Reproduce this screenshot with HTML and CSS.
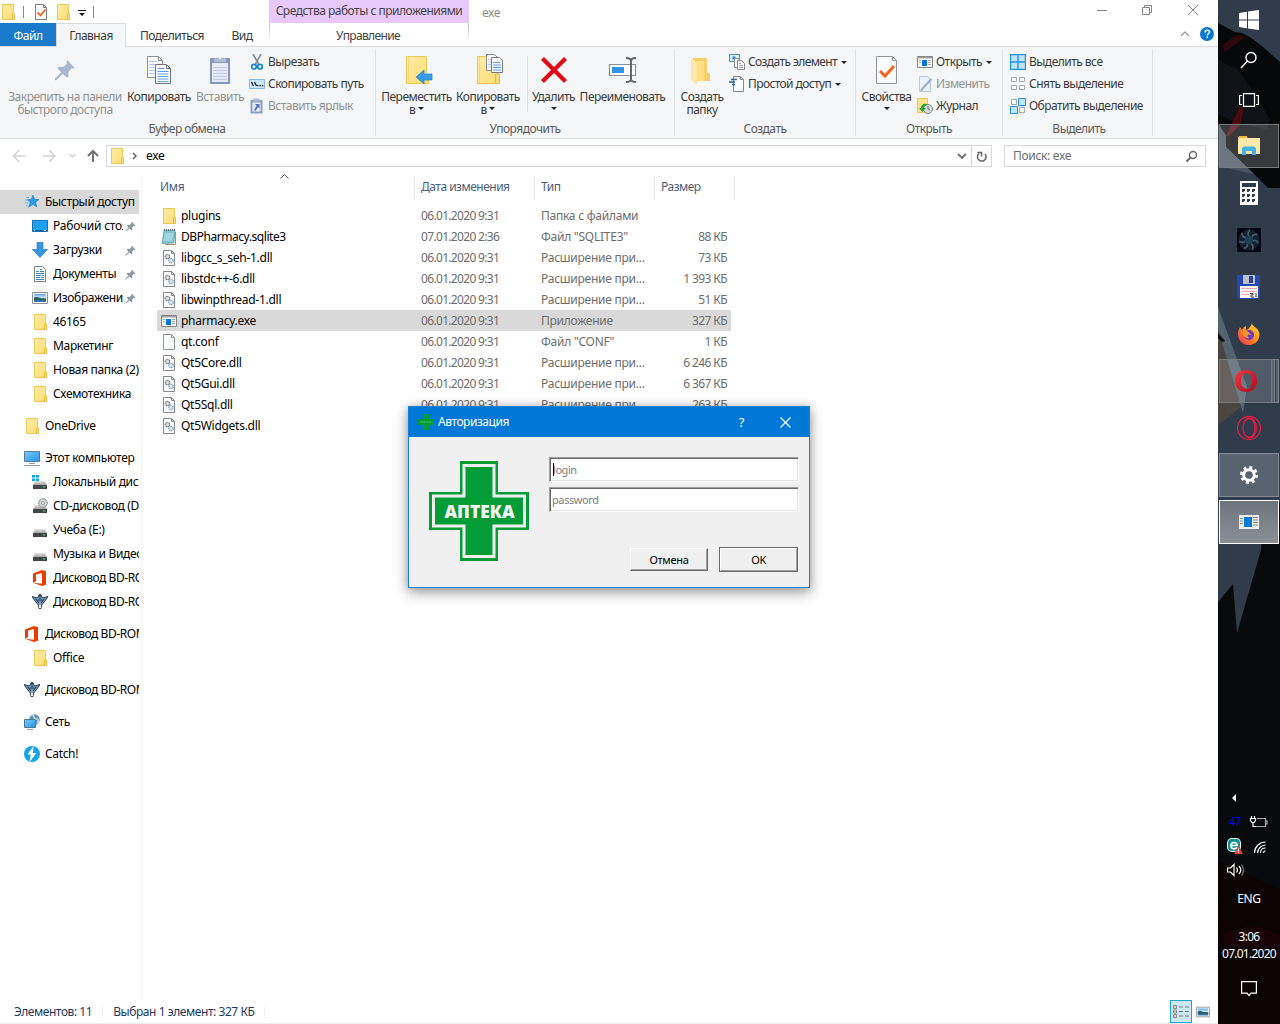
FILE: index.html
```html
<!DOCTYPE html>
<html lang="ru">
<head>
<meta charset="utf-8">
<title>exe</title>
<link rel="stylesheet" href="styles.css">
</head>
<body>
<svg class="sprite" width="0" height="0">
<defs>
<linearGradient id="gFolder" x1="0" y1="0" x2="1" y2="1"><stop offset="0" stop-color="#ffedA8"/><stop offset="1" stop-color="#fcdc72"/></linearGradient>
<linearGradient id="gBlue" x1="0" y1="0" x2="1" y2="1"><stop offset="0" stop-color="#7cc8fb"/><stop offset="1" stop-color="#2295ea"/></linearGradient>
<linearGradient id="gDrive" x1="0" y1="0" x2="0" y2="1"><stop offset="0" stop-color="#e2e2e2"/><stop offset="1" stop-color="#a5a5a5"/></linearGradient>
<linearGradient id="gFox" x1="1" y1="0" x2="0" y2="1"><stop offset="0" stop-color="#ffe52e"/><stop offset=".5" stop-color="#ff8a1e"/><stop offset="1" stop-color="#f0245c"/></linearGradient>
<linearGradient id="gOpera" x1="0" y1="0" x2="1" y2="1"><stop offset="0" stop-color="#ff3540"/><stop offset="1" stop-color="#a80a1c"/></linearGradient>
<linearGradient id="gPic" x1="0" y1="0" x2="0" y2="1"><stop offset="0" stop-color="#5ea9e6"/><stop offset=".5" stop-color="#d5ecfa"/><stop offset=".6" stop-color="#37687c"/><stop offset="1" stop-color="#3b79b5"/></linearGradient>
</defs>
<symbol id="folder" viewBox="0 0 16 16"><path d="M2.500.5h11v9l.5.5v5.500H2.500z" fill="url(#gFolder)" stroke="#ecc956"/><path d="M12.500 15.500v-5.500l1-1 1 1v5.500z" fill="#fbe08a" stroke="#e5bd45"/></symbol>
<symbol id="check" viewBox="0 0 16 16"><path d="M2.500.5h8l3 3v12h-11z" fill="#fbfcfd" stroke="#7d7d7d"/><path d="M10.500.5v3h3" fill="none" stroke="#7d7d7d"/><path d="M4.500 8.500l3 3 5-6" fill="none" stroke="#f0641e" stroke-width="1.800"/></symbol>
<symbol id="pin" viewBox="0 0 16 16"><path d="M9.500.8l5.700 5.700-1.400.6-.9-.4-2.500 2.700.2 3.200-1.300 1-2.900-2.900-4.600 4.500-1.200.2.200-1.200L5.300 9.600 2.600 6.900l1-1.300 3.200.200 2.700-2.500-.5-1z"/></symbol>
<symbol id="copy" viewBox="0 0 32 32"><path d="M4.500 2.500h11l4 4v17h-15z" fill="#fff" stroke="#8b9096"/><path d="M15.500 2.500v4h4" fill="none" stroke="#8b9096"/><path d="M6 7.500h8M6 10.500h11M6 13.500h11M6 16.500h11M6 19.500h11" stroke="#a5c8f5"/><path d="M12.500 10.500h11l4 4v15h-15z" fill="#fff" stroke="#70757b"/><path d="M23.500 10.500v4h4" fill="none" stroke="#70757b"/><path d="M14.500 14.500h7M14.500 17.500h11M14.500 20h11M14.500 22.500h11M14.500 25h11M14.500 27.500h11" stroke="#5a9cf0"/></symbol>
<symbol id="paste" viewBox="0 0 32 32"><rect x="6" y="4" width="20" height="26" rx="1" fill="#8498bd"/><path d="M8 9h16v19H8z" fill="#e5ebf5"/><path d="M9 13.500h14M9 16.500h14M9 19.500h14M9 22.500h14M9 25.500h14" stroke="#becbe0"/><path d="M10 8V4.500h3.500a3 3 0 0 1 5 0H22V8z" fill="#b1bfd5"/><circle cx="16" cy="4" r="1.200" fill="#eef2f8"/></symbol>
<symbol id="cut" viewBox="0 0 16 16"><path d="M4 0l5.500 10M12 0L6.500 10" stroke="#86909a" stroke-width="1.700"/><circle cx="5" cy="12.700" r="2.300" fill="none" stroke="#1684ca" stroke-width="1.700"/><circle cx="11" cy="12.700" r="2.300" fill="none" stroke="#1684ca" stroke-width="1.700"/></symbol>
<symbol id="path" viewBox="0 0 16 16"><path d="M.5 3.500h15v9H.5z" fill="#c9e7fb" stroke="#86bade"/><path d="M2.500 6l2 4M5.500 6l2 4" stroke="#111" stroke-width="1.200"/><path d="M8 9h1.300v1.300H8zM10.500 9h1.300v1.300h-1.300zM13 9h1.300v1.300H13z" fill="#111"/></symbol>
<symbol id="shortcut" viewBox="0 0 16 16"><path d="M1.500 2h12v13.500h-12z" fill="#8da0c2"/><path d="M3.500 4.500h8v9h-8z" fill="#e6ecf6"/><path d="M4.500 0.500h6v3h-6z" fill="#aab9d2"/><path d="M6 6h4.500v4.500L9 9.200 6.500 13 5 12l2.600-3.900z" fill="#5875ad"/></symbol>
<symbol id="moveto" viewBox="0 0 32 32"><path d="M5.500 2.500h20v20l2 1v6h-22z" fill="url(#gFolder)" stroke="#ecc956"/><path d="M7.500 3v26" stroke="#f3d878"/><path d="M15 23l8-7v4h8v6h-8v4z" fill="#3a9be8" stroke="#2680cb" stroke-width=".7"/></symbol>
<symbol id="copyto" viewBox="0 0 32 32"><path d="M5.500 2.500h20v20l2 1v6h-22z" fill="url(#gFolder)" stroke="#ecc956"/><path d="M7.500 3v26" stroke="#f3d878"/><path d="M23.500 29v-9h4v9" stroke="#e6be45" fill="#f9d876"/><path d="M14.500.5h8l3 3v13h-11z" fill="#fff" stroke="#85898d"/><path d="M16 5.500h5M16 8h5M16 10.500h5M16 13h5" stroke="#a6c9f3"/><path d="M19.500 3.500h8l3 3v12h-11z" fill="#fff" stroke="#777b80"/><path d="M21 8.500h7M21 11h8M21 13.500h8M21 16h8" stroke="#5698ef"/></symbol>
<symbol id="delete" viewBox="0 0 32 32"><path d="M4.500 4.500l23 23m0-23l-23 23" stroke="#df0b17" stroke-width="4.200"/></symbol>
<symbol id="rename" viewBox="0 0 32 32"><path d="M2.500 10.500h26v11h-26z" fill="#fff" stroke="#8b8f94" stroke-width="1.200"/><path d="M5 13h12v6H5z" fill="#2e95ea"/><path d="M19 4c3 0 5 1 5 3 0-2 2-3 5-3M24 6v20M19 28c3 0 5-1 5-3 0 2 2 3 5 3" fill="none" stroke="#64686c" stroke-width="2"/></symbol>
<symbol id="newfolder" viewBox="0 0 32 32"><path d="M7 4h14v14l3 2v7H9z" fill="#f5cf69"/><path d="M5 4l6 5v22l-6-5z" fill="#fde8a8"/><path d="M11 7h7v20h-7z" fill="#ffdf83"/></symbol>
<symbol id="newitem" viewBox="0 0 16 16"><path d="M.5.500h10v7H.5z" fill="#d7effc" stroke="#4d95bc"/><path d="M3.500 2.500h3v3h-3z" fill="#3186b4"/><path d="M5.500 4.500h5v9h-5z" fill="#fff" stroke="#8a8e92"/><path d="M8.500 6.500h4l3 3v6h-7z" fill="#fff" stroke="#85898d"/><path d="M10 9.500h2M10 11.500h4M10 13.500h4" stroke="#b799a3"/></symbol>
<symbol id="access" viewBox="0 0 16 16"><path d="M4.500.5h7l3 3v12h-10z" fill="#fff" stroke="#858a8e"/><path d="M11.500.5v3h3" fill="none" stroke="#858a8e"/><path d="M2 3.500h6M0 6h6M3 8.500h3" stroke="#20618f" stroke-width="1.300"/></symbol>
<symbol id="props" viewBox="0 0 32 32"><path d="M5.500 2.500h16l4 4v23h-20z" fill="#fcfcfd" stroke="#909499"/><path d="M21.500 2.500v4h4" fill="none" stroke="#909499"/><path d="M9 17l5 5 9-10" fill="none" stroke="#f0641e" stroke-width="3"/></symbol>
<symbol id="app" viewBox="0 0 16 16"><path d="M.5 2.500h15v11H.5z" fill="#fff" stroke="#818589"/><path d="M1 3h14v1.500H1z" fill="#9da1a4"/><path d="M5 6h5v6H5z" fill="#0078d7"/><path d="M11 6.500h3M11 8.500h3M11 10.500h3M2 6.500h2M2 8.500h2" stroke="#a2a6aa"/></symbol>
<symbol id="edit" viewBox="0 0 16 16"><path d="M2.500.5h8l3 3v12h-11z" fill="#edf1f9" stroke="#bdc9dc"/><path d="M14.500 3L6 12l-2 3" stroke="#9cafd0" stroke-width="2" fill="none"/></symbol>
<symbol id="history" viewBox="0 0 16 16"><path d="M.5.5h10v14H.5z" fill="#fde28a" stroke="#ecc956"/><circle cx="11" cy="11" r="4.500" fill="#d9dcdc" stroke="#848989"/><path d="M11 8v3l2 1" fill="none" stroke="#6c7070"/><path d="M10 6C6 5 4 7 4 10H2l3.500 4L9 10H7c0-2 1-3 3-3z" fill="#23a735"/></symbol>
<symbol id="selall" viewBox="0 0 16 16"><path d="M.5.500h15v15H.5zM8 .5v15M.5 8h15" fill="#bfe3fb" stroke="#2390e0" stroke-width="1.300"/></symbol>
<symbol id="selnone" viewBox="0 0 16 16"><path d="M1.500 1.500h5v4h-5zM9.500 1.500h5v4h-5zM1.500 9.500h5v4h-5zM9.500 9.500h5v4h-5z" fill="#fff" stroke="#a6a9ac"/></symbol>
<symbol id="selinv" viewBox="0 0 16 16"><path d="M1.500 1.500h5v5h-5zM9.500 9.500h5v5h-5z" fill="#fff" stroke="#a6a9ac"/><path d="M8.500.5h7v7h-7zM.5 8.500h7v7h-7z" fill="#bfe3fb" stroke="#2390e0"/></symbol>
<symbol id="star" viewBox="0 0 16 16"><path d="M9 1l1.600 4.300 4.400.2-3.400 2.900 1.300 4.600L9 10.500l-4.300 2.700 1.500-4.800L3 5.500l4.400-.2z" fill="#299ce8" stroke="#1e7fc8" stroke-width=".6"/><path d="M2 3.500h3M1 6h3M1 9h3.500M2 12h2" stroke="#66b7ec"/></symbol>
<symbol id="desktop" viewBox="0 0 16 16"><path d="M.5 2.500h15v11H.5z" fill="#1ea1f5" stroke="#1472b8"/><path d="M1 12.500h14" stroke="#0e66a6"/><path d="M2 12.500h1M12 12.500h2" stroke="#fff"/></symbol>
<symbol id="download" viewBox="0 0 16 16"><path d="M5 .5h6v7h4.500L8 15.500.5 7.500H5z" fill="#3995e2" stroke="#2578c2" stroke-width=".7"/></symbol>
<symbol id="docs" viewBox="0 0 16 16"><path d="M2.500.5h8l3 3v12h-11z" fill="#fff" stroke="#7e8387"/><path d="M4 5.500h3M8 3.500h2M8 5.500h4M4 7.500h8M4 9.500h5M10 9.500h2M4 11.500h4M9 11.500h3M4 13.500h8" stroke="#3c83b7"/></symbol>
<symbol id="image" viewBox="0 0 16 16"><path d="M.5 2.500h15v11H.5z" fill="#fff" stroke="#8c9195"/><path d="M2 4h12v8H2z" fill="url(#gPic)"/><path d="M2 7.500c4-2 6 2 12 1V10H2z" fill="#295e67"/></symbol>
<symbol id="pc" viewBox="0 0 16 16"><path d="M.5 1.500h15v10H.5z" fill="url(#gBlue)" stroke="#557c94"/><path d="M5 13.500h6M0 15.500h16" stroke="#8ba0b0"/></symbol>
<symbol id="drive" viewBox="0 0 16 16"><path d="M3 7h10l2 4H1z" fill="url(#gDrive)"/><path d="M1 11h14v4H1z" fill="#42474a"/><path d="M11 12.500h2v1h-2z" fill="#45e34d"/></symbol>
<symbol id="windrive" viewBox="0 0 16 16"><use href="#drive"/><path d="M0 1h3v2.500H0zM4 1h3v2.500H4zM0 4.500h3V7H0zM4 4.500h3V7H4z" fill="#00a8e8"/></symbol>
<symbol id="cddrive" viewBox="0 0 16 16"><use href="#drive"/><circle cx="11" cy="5" r="4.300" fill="#d3d5d6" stroke="#8f9395"/><circle cx="11" cy="5" r="1.500" fill="#fff" stroke="#909394"/></symbol>
<symbol id="office" viewBox="0 0 16 16"><path d="M1 3.500L10 0l4 1.200v13.600L10 16l-9-3.300 9 1V3L4 4.500v6.700l-3 1.500z" fill="#eb3c00"/></symbol>
<symbol id="ship" viewBox="0 0 16 16"><path d="M0 2.500l5.500 1.500L7 1h2l1.500 3L16 2.500 13 7l-3.500 4L9 14.500H7L6.500 11 3 7z" fill="#7fa6c6" stroke="#192a39" stroke-width=".9"/><path d="M8 0v5M3.500 4.500L7 9M12.500 4.500L9 9M5.500 6h5" stroke="#142638" fill="none"/><path d="M7 11h2v3H7z" fill="#e7f3fa"/></symbol>
<symbol id="network" viewBox="0 0 16 16"><circle cx="10.500" cy="5.500" r="5.300" fill="#6495b9"/><path d="M8 1c3 0 1 4 4 4s3 3 1 4" fill="none" stroke="#c4e0ec" stroke-width="1.500"/><path d="M.5 5.500h11v8H.5z" fill="url(#gBlue)" stroke="#4b7a98"/><path d="M3 15.500h6" stroke="#8b9ca8"/></symbol>
<symbol id="catch" viewBox="0 0 16 16"><circle cx="8" cy="8" r="8" fill="#13a5e8"/><path d="M9.500 0L3.500 8.500h3.200L5.500 16l7-9H9z" fill="#fff"/></symbol>
<symbol id="dll" viewBox="0 0 16 16"><path d="M2.500.5h8l3 3v12h-11z" fill="#fff" stroke="#85898d"/><path d="M10.500.5v3h3" fill="none" stroke="#85898d"/><circle cx="6.500" cy="6.500" r="2.200" fill="#dcdfe1" stroke="#757b80" stroke-width="1.300" stroke-dasharray="1.300 .5"/><circle cx="10" cy="10.500" r="2.200" fill="#d7e9f7" stroke="#7ea6c3" stroke-width="1.300" stroke-dasharray="1.300 .5"/></symbol>
<symbol id="file" viewBox="0 0 16 16"><path d="M2.500.5h8l3 3v12h-11z" fill="#fafbfc" stroke="#909498"/><path d="M10.500.5v3h3" fill="none" stroke="#909498"/></symbol>
<symbol id="note" viewBox="0 0 16 16"><path d="M3 1.500h11l-1 12.500-12 .5z" fill="#83c5d2" stroke="#5b929d" stroke-width=".7"/><path d="M4 5h8M3.500 7h8.500M3.500 9h8M3 11h8" stroke="#bfe6ec"/><path d="M14.500 3v12.500H4" fill="none" stroke="#a3946c"/><path d="M3 1h11" stroke="#4c6c72" stroke-width="2" stroke-dasharray="1 1"/></symbol>
<symbol id="cross" viewBox="0 0 100 100"><path d="M31 0h38v31h31v38H69v31H31V69H0V31h31z" fill="#049c36"/><path d="M35 4.500h30v30.500h30.500v30H65v30.500H35V65H4.500V35H35z" fill="none" stroke="#efefef" stroke-width="3"/></symbol>
</svg>

<div class="screen">
<main class="explorer">
  <header class="top">
    <div class="top-left">
      <div class="quick"><svg class="i"><use href="#folder"/></svg><i class="vr"></i><svg class="i q2"><use href="#check"/></svg><svg class="i q3"><use href="#folder"/></svg><svg class="q4" width="8" height="7"><path d="M0 0h8v1H0zM1 3h6L4 6z" fill="#111"/></svg><i class="vr"></i></div>
      <nav class="tabs"><span class="tab file">Файл</span><span class="tab active">Главная</span><span class="tab share">Поделиться</span><span class="tab">Вид</span></nav>
    </div>
    <div class="context"><div class="ctx-title">Средства работы с приложениями</div><div class="ctx-tab">Управление</div></div>
    <div class="wintitle">exe</div>
    <div class="controls">
      <svg width="104" height="16" viewBox="0 0 104 16" fill="none" stroke="#858585"><path d="M1 10.500h10M46.500 7.500h7v7h-7zM48.500 7.500v-2h7v7h-2M92 5l10 10m0-10L92 15"/></svg>
      <svg width="34" height="16" viewBox="0 0 34 16"><path d="M1 10l4-4 4 4" fill="none" stroke="#999" stroke-width="1.200"/><circle cx="27" cy="8" r="7" fill="#0a77d0"/><path d="M25 6.500c0-3 4.500-3 4.500-.5 0 1.500-2.200 1.500-2.200 3.500M27.300 10.500V12" fill="none" stroke="#fff" stroke-width="1.400"/></svg>
    </div>
  </header>

  <section class="ribbon">
    <div class="group g1">
      <div class="tools">
        <div class="big b-pin off"><svg class="pin-big"><use href="#pin"/></svg><span>Закрепить на панели<br>быстрого доступа</span></div>
        <div class="big b-copy"><svg><use href="#copy"/></svg><span>Копировать</span></div>
        <div class="big b-paste off"><svg><use href="#paste"/></svg><span>Вставить</span></div>
        <div class="small"><div><svg class="i"><use href="#cut"/></svg><span>Вырезать</span></div><div><svg class="i"><use href="#path"/></svg><span>Скопировать путь</span></div><div class="off"><svg class="i"><use href="#shortcut"/></svg><span>Вставить ярлык</span></div></div>
      </div><div class="caption">Буфер обмена</div>
    </div>
    <div class="group g2">
      <div class="tools">
        <div class="big b-move"><svg><use href="#moveto"/></svg><span>Переместить<br>в <i class="dd"></i></span></div>
        <div class="big b-copyto"><svg><use href="#copyto"/></svg><span>Копировать<br>в <i class="dd"></i></span></div>
        <i class="sep"></i>
        <div class="big b-del"><svg><use href="#delete"/></svg><span>Удалить<br><i class="dd"></i></span></div>
        <div class="big b-ren"><svg><use href="#rename"/></svg><span>Переименовать</span></div>
      </div><div class="caption">Упорядочить</div>
    </div>
    <div class="group g3">
      <div class="tools">
        <div class="big b-new"><svg><use href="#newfolder"/></svg><span>Создать<br>папку</span></div>
        <div class="small"><div><svg class="i"><use href="#newitem"/></svg><span>Создать элемент</span><i class="dd"></i></div><div><svg class="i"><use href="#access"/></svg><span>Простой доступ</span><i class="dd"></i></div></div>
      </div><div class="caption">Создать</div>
    </div>
    <div class="group g4">
      <div class="tools">
        <div class="big b-prop"><svg><use href="#props"/></svg><span>Свойства<br><i class="dd"></i></span></div>
        <div class="small"><div><svg class="i"><use href="#app"/></svg><span>Открыть</span><i class="dd"></i></div><div class="off"><svg class="i"><use href="#edit"/></svg><span>Изменить</span></div><div><svg class="i"><use href="#history"/></svg><span>Журнал</span></div></div>
      </div><div class="caption">Открыть</div>
    </div>
    <div class="group g5">
      <div class="tools">
        <div class="small"><div><svg class="i"><use href="#selall"/></svg><span>Выделить все</span></div><div><svg class="i"><use href="#selnone"/></svg><span>Снять выделение</span></div><div><svg class="i"><use href="#selinv"/></svg><span>Обратить выделение</span></div></div>
      </div><div class="caption">Выделить</div>
    </div>
  </section>

  <section class="address">
    <svg class="nav" width="106" height="20" viewBox="0 0 106 20" fill="none"><path d="M13.500 10h12M19 4.500L13.500 10l5.500 5.500M43 10h12M49.500 4.500L55 10l-5.500 5.500" stroke="#d2d2d2" stroke-width="1.500"/><path d="M69.500 8l3 3 3-3" stroke="#d2d2d2" stroke-width="1.300"/><path d="M93 16V5M88 10l5-5 5 5" stroke="#707070" stroke-width="2"/></svg>
    <div class="crumbs"><svg class="i"><use href="#folder"/></svg><svg class="chev" width="6" height="8"><path d="M1 1l3 3-3 3" fill="none" stroke="#666" stroke-width="1.500"/></svg><span>exe</span><svg class="drop" width="10" height="7"><path d="M1 1l4 4 4-4" fill="none" stroke="#707070" stroke-width="1.800"/></svg><i class="refresh"><svg width="12" height="13" viewBox="0 0 12 13"><path d="M3 3.500A4.300 4.300 0 1 0 9 4M1.500 2.500h4v4" fill="none" stroke="#666" stroke-width="1.500"/></svg></i></div>
    <div class="search"><span>Поиск: exe</span><svg width="13" height="13" viewBox="0 0 13 13"><circle cx="8" cy="5" r="3.500" fill="none" stroke="#666" stroke-width="1.400"/><path d="M5.500 7.500L1.500 11.500" stroke="#666" stroke-width="1.800"/></svg></div>
  </section>

  <section class="content">
    <aside class="tree">
      <div class="n sel"><svg class="i"><use href="#star"/></svg><span>Быстрый доступ</span></div>
      <div class="n sub"><svg class="i"><use href="#desktop"/></svg><span class="cut desk">Рабочий стол</span><svg class="pin"><use href="#pin"/></svg></div>
      <div class="n sub"><svg class="i"><use href="#download"/></svg><span class="cut">Загрузки</span><svg class="pin"><use href="#pin"/></svg></div>
      <div class="n sub"><svg class="i"><use href="#docs"/></svg><span class="cut">Документы</span><svg class="pin"><use href="#pin"/></svg></div>
      <div class="n sub"><svg class="i"><use href="#image"/></svg><span class="cut">Изображения</span><svg class="pin"><use href="#pin"/></svg></div>
      <div class="n sub"><svg class="i"><use href="#folder"/></svg><span>46165</span></div>
      <div class="n sub"><svg class="i"><use href="#folder"/></svg><span>Маркетинг</span></div>
      <div class="n sub"><svg class="i"><use href="#folder"/></svg><span>Новая папка (2)</span></div>
      <div class="n sub"><svg class="i"><use href="#folder"/></svg><span>Схемотехника</span></div>
      <div class="n root"><svg class="i"><use href="#folder"/></svg><span>OneDrive</span></div>
      <div class="n root"><svg class="i"><use href="#pc"/></svg><span>Этот компьютер</span></div>
      <div class="n sub"><svg class="i"><use href="#windrive"/></svg><span>Локальный диск</span></div>
      <div class="n sub"><svg class="i"><use href="#cddrive"/></svg><span>CD-дисковод (D:)</span></div>
      <div class="n sub"><svg class="i"><use href="#drive"/></svg><span>Учеба (E:)</span></div>
      <div class="n sub"><svg class="i"><use href="#drive"/></svg><span>Музыка и Видео</span></div>
      <div class="n sub"><svg class="i"><use href="#office"/></svg><span class="bd">Дисковод BD-ROM</span></div>
      <div class="n sub"><svg class="i"><use href="#ship"/></svg><span class="bd">Дисковод BD-ROM</span></div>
      <div class="n root"><svg class="i"><use href="#office"/></svg><span class="bd">Дисковод BD-ROM</span></div>
      <div class="n sub"><svg class="i"><use href="#folder"/></svg><span>Office</span></div>
      <div class="n root"><svg class="i"><use href="#ship"/></svg><span class="bd">Дисковод BD-ROM</span></div>
      <div class="n root"><svg class="i"><use href="#network"/></svg><span>Сеть</span></div>
      <div class="n root"><svg class="i"><use href="#catch"/></svg><span>Catch!</span></div>
    </aside>
    <div class="files">
      <div class="head"><span class="h1">Имя<svg width="9" height="5"><path d="M.5 4.500l4-4 4 4" fill="none" stroke="#555"/></svg></span><span>Дата изменения</span><span>Тип</span><span class="h4">Размер</span></div>
      <div class="r"><svg class="i"><use href="#folder"/></svg><b>plugins</b><span class="date">06.01.2020 9:31</span><span>Папка с файлами</span><em></em></div>
      <div class="r"><svg class="i"><use href="#note"/></svg><b class="db">DBPharmacy.sqlite3</b><span class="date">07.01.2020 2:36</span><span>Файл "SQLITE3"</span><em>88 КБ</em></div>
      <div class="r"><svg class="i"><use href="#dll"/></svg><b>libgcc_s_seh-1.dll</b><span class="date">06.01.2020 9:31</span><span>Расширение при...</span><em>73 КБ</em></div>
      <div class="r"><svg class="i"><use href="#dll"/></svg><b>libstdc++-6.dll</b><span class="date">06.01.2020 9:31</span><span>Расширение при...</span><em>1 393 КБ</em></div>
      <div class="r"><svg class="i"><use href="#dll"/></svg><b>libwinpthread-1.dll</b><span class="date">06.01.2020 9:31</span><span>Расширение при...</span><em>51 КБ</em></div>
      <div class="r picked"><svg class="i"><use href="#app"/></svg><b>pharmacy.exe</b><span class="date">06.01.2020 9:31</span><span>Приложение</span><em>327 КБ</em></div>
      <div class="r"><svg class="i"><use href="#file"/></svg><b>qt.conf</b><span class="date">06.01.2020 9:31</span><span>Файл "CONF"</span><em>1 КБ</em></div>
      <div class="r"><svg class="i"><use href="#dll"/></svg><b>Qt5Core.dll</b><span class="date">06.01.2020 9:31</span><span>Расширение при...</span><em>6 246 КБ</em></div>
      <div class="r"><svg class="i"><use href="#dll"/></svg><b>Qt5Gui.dll</b><span class="date">06.01.2020 9:31</span><span>Расширение при...</span><em>6 367 КБ</em></div>
      <div class="r"><svg class="i"><use href="#dll"/></svg><b>Qt5Sql.dll</b><span class="date">06.01.2020 9:31</span><span>Расширение при...</span><em>263 КБ</em></div>
      <div class="r"><svg class="i"><use href="#dll"/></svg><b>Qt5Widgets.dll</b></div>
    </div>
  </section>

  <footer class="status"><span>Элементов: 11</span><i></i><span>Выбран 1 элемент: 327 КБ</span><i></i>
    <div class="views"><div class="details"><svg width="16" height="14" viewBox="0 0 16 14"><path d="M.5.500h3v3h-3zM.5 5h3v3h-3zM.5 9.500h3v3h-3z" fill="#fff" stroke="#888"/><path d="M6 2h4M12 2h4M6 6.500h4M12 6.500h4M6 11h4M12 11h4" stroke="#777"/><path d="M1.500 1.500h1v1h-1z" fill="#b33"/><path d="M1.500 6h1v1h-1z" fill="#27c"/><path d="M1.500 10.500h1v1h-1z" fill="#b33"/></svg></div><svg class="thumbs"><use href="#image"/></svg></div>
  </footer>
</main>

<aside class="taskbar">
  <svg class="wall" width="62" height="1024" viewBox="0 0 62 1024"><path fill="#303c4a" d="M0 0h62v1024H0z"/><path fill="#07080a" d="M0 23l17 9 7 1 8 4 13 10 17 15v126H50l-15-15L8 147v-12l-8-12z"/><path fill="#101217" d="M0 60l20 10 18 25 14 25-3 10-30-8L0 115z"/><path fill="#2b080c" d="M4 45l15-10 8 2L7 52z"/><path fill="#4b0b0e" d="M22 106l4 4-4 15-11 11H8l8-17z"/><path fill="#495461" d="M0 124l8 12v11l28 27-10-2-26-6z"/><path fill="#4a4541" d="M0 332l9 10 8 28 8 28-3 10-22 17z"/><path fill="#53646f" d="M0 307l29 80-4 26L0 329z"/><path fill="#0b0b0c" d="M0 333l7 8-3 1-4-4z"/><path fill="#090a0b" d="M0 602l15-18 4 49 24-83 2-23 17-25v522H0z"/><path fill="#0b0304" d="M0 860l62 30v134H0z"/><path fill="#180407" d="M5 933l30-8 27 10v12H7z"/></svg>
  <div class="task s"><svg width="20" height="20" viewBox="0 0 20 20" fill="#fff"><path d="M0 3l8-1.200v7.700H0zM9 1.600L20 0v9.500H9zM0 10.500h8v7.700L0 17zM9 10.500h11V20L9 18.400z"/></svg></div>
  <div class="task s"><svg width="18" height="18" viewBox="0 0 18 18" fill="none" stroke="#fff" stroke-width="1.400"><circle cx="11" cy="6.500" r="5"/><path d="M7.500 10L1 17"/></svg></div>
  <div class="task s"><svg width="20" height="14" viewBox="0 0 20 14" fill="none" stroke="#fff" stroke-width="1.200"><path d="M4.500.6h11v12.800h-11zM3 2.500H.6v9H3M17 2.500h2.400v9H17"/></svg></div>
  <div class="task first"><div class="box"><svg width="22" height="19" viewBox="0 0 22 19"><path d="M0 1h9l1 1h12v16H0z" fill="#ffe9a6"/><path d="M1 0h8v2H1z" fill="#f1bb36"/><path d="M4 19v-7l2-1.500h10l2 1.500v7h-4v-4H8v4z" fill="#43b1e5"/></svg></div></div>
  <div class="task"><svg width="18" height="24" viewBox="0 0 18 24"><path d="M0 0h18v24H0z" fill="#fff"/><path d="M2 2h14v4H2z" fill="#2f3d49"/><path d="M2 8h3v2H4v1H2zM7 8h3v2H9v1H7zM12 8h3v2h-1v1h-2zM2 13h3v2H4v1H2zM7 13h3v2H9v1H7zM12 13h3v2h-1v1h-2zM2 18h3v2H4v1H2zM7 18h3v2H9v1H7zM12 18h3v2h-1v1h-2z" fill="#2f3d49"/></svg></div>
  <div class="task"><svg width="24" height="24" viewBox="0 0 24 24"><rect width="24" height="24" rx="1" fill="#030611"/><circle cx="12" cy="12" r="10.500" fill="#14202e"/><g fill="none" stroke="#425b6c" stroke-width="1.800"><path id="fb" d="M12 8c-2-2-1-4 1-6"/><use href="#fb" transform="rotate(51 12 12)"/><use href="#fb" transform="rotate(103 12 12)"/><use href="#fb" transform="rotate(154 12 12)"/><use href="#fb" transform="rotate(206 12 12)"/><use href="#fb" transform="rotate(257 12 12)"/><use href="#fb" transform="rotate(309 12 12)"/></g><circle cx="12" cy="12" r="4" fill="#1e4054"/></svg></div>
  <div class="task"><svg width="24" height="24" viewBox="0 0 24 24"><path d="M1 0h21l1 1v23H2l-2-2V0z" fill="#2449b2"/><path d="M6 0h12v9H6z" fill="#b9c1cb"/><path d="M12 1h4v7h-4z" fill="#2b418d"/><path d="M3 11h18v12H3z" fill="#fff6f3"/><path d="M4 13.500h16M4 16.500h16M4 19.500h8" stroke="#ecaaa8"/><path d="M13 18.500h3v1.500h-2v2h3M19 18v4.500" stroke="#444" fill="none"/></svg></div>
  <div class="task"><svg width="24" height="24" viewBox="0 0 24 24"><path d="M15 1c0 3 4 4 6 7 4 7-1 15-9 15C5 23 1 18 1 12c0-3 1-5 2-7l2 3c1-2 3-4 4-4v4c3-1 5-4 6-7z" fill="url(#gFox)"/><circle cx="12" cy="13" r="5" fill="#683dc4"/><path d="M5 9c4-1 8 1 9 4-4-2-5 2-1 3-5 1-8-3-8-7z" fill="#ff962b"/></svg></div>
  <div class="task"><div class="box stacked"><svg width="24" height="24" viewBox="0 0 24 24"><path fill="url(#gOpera)" fill-rule="evenodd" d="M12 1c7 0 11 5 11 11s-4 11-11 11S1 18 1 12 5 1 12 1zm1 3C9 4 7 8 7 12s2 8 6 8 5-4 5-8-1-8-5-8z"/></svg></div><i class="stack"></i></div>
  <div class="task"><svg width="26" height="26" viewBox="0 0 26 26" fill="none" stroke="#e11d48" stroke-width="1.300"><circle cx="13" cy="13" r="11.500"/><ellipse cx="13" cy="13" rx="6" ry="9.500"/><path d="M12 3.500c11-3 11 22 0 19"/></svg></div>
  <div class="task"><div class="box gray"><svg width="20" height="20" viewBox="0 0 20 20"><circle cx="10" cy="10" r="5.300" fill="none" stroke="#fff" stroke-width="3"/><circle cx="10" cy="10" r="7.500" fill="none" stroke="#fff" stroke-width="3" stroke-dasharray="3 2.890"/></svg></div></div>
  <div class="task"><div class="box current"><svg width="20" height="14" viewBox="0 0 20 14"><path d="M0 0h20v14H0z" fill="#eee"/><path d="M5 2h8v10H5z" fill="#087bd5"/><path d="M1 3.500h3M1 6h3M1 8.500h3M14 2.500h5M14 5h5M14 7.500h5M14 10h5" stroke="#888"/></svg></div></div>
  <div class="tray">
    <svg width="62" height="90" viewBox="0 0 62 90"><path d="M18 4v8L14 8z" fill="#fff"/><g fill="none" stroke="#fff" stroke-width="1.200"><path d="M39 28.500h8.500v8H37M47.500 31h1.500v3h-1.500" stroke="#aaa"/><path d="M33.500 26v2M36.500 26v2M32.500 28.500h5v2l-1.500 2h-2l-1.500-2zM35 32v4.500h3"/><path d="M36.500 63c0-6 5-11 11-11M39.500 63c0-4 4-8 8-8M42.500 63c0-3 2-5 5-5M45.500 63c0-1 1-2 2-2"/><path d="M9.500 78h3l3.500-3.500v11L12.500 82h-3zM18.500 77.500q2 2.500 0 5M21 76q3.500 4 0 8"/><path d="M23.500 74.500q4 5.500 0 11" stroke="#777"/></g><rect x="9" y="48" width="14" height="14" rx="5" fill="#eaf7f6"/><rect x="10" y="49" width="12" height="12" rx="4" fill="#138e93"/><path d="M13 55.500h6c0-4-6-4-6 0s4 4 6 2" fill="none" stroke="#fff" stroke-width="1.700"/><path d="M20.500 56l4.500 8h-9z" fill="#e6443d"/><path d="M20.500 58.500v3M20.500 62v1" stroke="#fff"/></svg>
    <span class="temp">47</span>
  </div>
  <div class="lang">ENG</div>
  <div class="clock">3:06<br>07.01.2020</div>
  <svg class="notif" width="16" height="16" viewBox="0 0 16 16"><path d="M.6.600h14.800v11.500H10L8 14.500l-2-2.400H.6z" fill="none" stroke="#fff" stroke-width="1.200"/></svg>
</aside>

<section class="dialog">
  <header><svg class="i"><path d="M5 0h6v5h5v6h-5v5H5v-5H0V5h5z" fill="#049c36"/><path d="M2.500 8h11" stroke="#7cc78f" stroke-dasharray="1 .6"/></svg><span>Авторизация</span><b>?</b><svg class="x" width="11" height="11" viewBox="0 0 11 11"><path d="M.5.500l10 10m0-10l-10 10" stroke="#fff" stroke-width="1.200"/></svg></header>
  <div class="body">
    <svg class="logo" width="100" height="100" viewBox="0 0 100 100"><use href="#cross"/><text x="15.500" y="56.500" textLength="70" lengthAdjust="spacingAndGlyphs">АПТЕКА</text></svg>
    <div class="form"><div class="field focus">login</div><div class="field">password</div><div class="buttons"><div class="btn">Отмена</div><div class="btn ok">OK</div></div></div>
  </div>
</section>
</div>
</body>
</html>
```
FILE: styles.css
```css
* { box-sizing: border-box; }
body { margin: 0; font: 12px/16px "Noto Sans", "Open Sans", sans-serif; letter-spacing: -.33px; color: #000; overflow: hidden; }
.sprite { position: absolute; }
.screen { position: relative; display: flex; width: 1280px; height: 1024px; }
.i { width: 16px; height: 16px; flex: none; }
i, em { font-style: normal; }
b { font-weight: 400; }
span { white-space: nowrap; }
.explorer { width: 1218px; display: flex; flex-direction: column; background: #fff; }

.top { height: 47px; display: flex; flex: none; border-bottom: 1px solid #dadbdc; letter-spacing: -.5px; }
.top-left { width: 269px; }
.quick { height: 23px; display: flex; align-items: center; }
.vr { width: 1px; height: 12px; background: #888; margin-left: 7px; }
.q2 { margin-left: 9px; }
.q3 { margin-left: 6px; }
.q4 { margin-left: 7px; margin-top: 3px; }
.quick .vr:last-child { margin-left: 7px; }
.tabs { display: flex; height: 24px; color: #3b3b3b; }
.tab { height: 24px; line-height: 25px; text-align: center; padding: 0 12px; }
.tab.file { width: 56px; background: #1979ca; color: #fff; height: 23px; }
.tab.active { width: 70px; border: 1px solid #dadbdc; border-bottom: 0; background: #f5f6f7; line-height: 23px; }
.tab.share { width: 92px; }
.tab:last-child { width: 48px; }
.context { width: 200px; color: #444; text-align: center; }
.ctx-title { height: 23px; line-height: 21px; background: #e9c9fb; white-space: nowrap; }
.ctx-tab { height: 18px; padding-right: 2px; line-height: 25px; letter-spacing: -.65px; border: solid; border-width: 0 1px; border-image: linear-gradient(#bbb, #fff) 1; }
.wintitle { margin-left: 13px; line-height: 25px; color: #8b8b8b; flex: 1; }
.controls { display: flex; flex-direction: column; align-items: flex-end; }
.controls svg:first-child { margin-right: 18px; }
.controls svg:last-child { margin: 10px 4px 0 0; }

.ribbon { height: 92px; flex: none; display: flex; background: #f5f6f7; border-bottom: 1px solid #dadbdc; color: #3a3a3a; letter-spacing: -.52px; }
.group { display: flex; flex-direction: column; border-right: 1px solid #e1e2e3; margin: 2px 0 3px; height: 87px; }
.g1 { width: 376px; padding-left: 3px; } .g2 { width: 299px; padding-left: 4px; } .g3 { width: 181px; padding-left: 4px; } .g4 { width: 147px; padding-left: 4px; } .g5 { width: 150px; padding-left: 7px; }
.tools { display: flex; height: 72px; flex: none; }
.caption { text-align: center; line-height: 16px; color: #5a5a5a; padding-right: 4px; }
.big { flex: none; display: flex; flex-direction: column; align-items: center; text-align: center; line-height: 13px; padding-top: 5px; }
.big > svg { width: 32px; height: 32px; flex: none; margin-bottom: 4px; }
.big > .pin-big { width: 22px; height: 22px; margin: 5px 0 9px; fill: #a8b7cf; }
.big .dd { margin-left: 0; vertical-align: 4px; }
.b-pin { width: 124px; } .b-copy { width: 64px; } .b-paste { width: 58px; } .b-move { width: 73px; } .b-copyto { width: 70px; } .b-del { width: 51px; } .b-ren { width: 87px; } .b-new { width: 46px; } .b-prop { width: 53px; }
.small { flex: none; margin: 2px 0 0 0; width: 120px; }
.g3 .small { margin-left: 4px; width: 126px; }
.g4 .small { margin-left: 4px; width: 80px; }
.small > div { height: 22px; display: flex; align-items: center; }
.small span { margin-left: 3px; }
.g3 .small span { letter-spacing: -.6px; }
.off { color: #929292; }
.sep { flex: none; height: 56px; width: 1px; margin: 7px 0 0 4px; background: #dedfe0; }
.dd { display: inline-block; border: 3px solid transparent; border-top-color: #222; border-bottom: 0; margin-left: 4px; }

.address { height: 37px; flex: none; display: flex; padding-top: 6px; }
.nav { margin-top: 1px; flex: none; }
.crumbs, .search { height: 22px; border: 1px solid #d9d9d9; display: flex; align-items: center; }
.crumbs { width: 886px; padding-left: 2px; }
.chev { margin: 0 8px 0 7px; }
.crumbs span { flex: 1; }
.drop { margin-right: 4px; }
.refresh { width: 20px; height: 20px; border-left: 1px solid #d9d9d9; display: flex; align-items: center; justify-content: center; }
.search { width: 202px; margin-left: 12px; padding: 0 7px 0 8px; justify-content: space-between; color: #6d6d6d; }

.content { height: 824px; display: flex; }
.tree { width: 142px; padding-top: 14px; border-right: 1px solid #f4f4f4; overflow: hidden; }
.n { width: 139px; height: 24px; padding-left: 24px; display: flex; align-items: center; overflow: hidden; }
.n span { margin-left: 5px; }
.n .bd { letter-spacing: -.44px; }
.n .desk { letter-spacing: -.22px; }
.sub { padding-left: 32px; }
.root { margin-top: 8px; }
.sel { background: #d9d9d9; }
.n .cut { width: 70px; overflow: hidden; }
.pin { width: 11px; height: 11px; fill: #8c98a3; margin-left: 2px; flex: none; }
.files { width: 593px; padding-left: 15px; }
.head { display: flex; height: 24px; margin-bottom: 5px; color: #4c607a; letter-spacing: -.5px; }
.head span { width: 120px; padding-left: 6px; border-left: 1px solid #e5e5e5; line-height: 22px; }
.head .h1 { position: relative; width: 257px; padding-left: 3px; border: 0; letter-spacing: -.3px; }
.h1 svg { position: absolute; left: 123px; top: -2px; }
.head .h4 { width: 81px; border-right: 1px solid #e5e5e5; }
.r { display: grid; grid-template-columns: 16px 240px 120px 120px 70px; width: 574px; height: 21px; padding-left: 4px; align-items: center; color: #6d6d6d; letter-spacing: -.25px; }
.r b { color: #000; padding-left: 4px; letter-spacing: -.28px; }
.r .db { letter-spacing: -.45px; }
.r span { padding-left: 4px; }
.r .date { letter-spacing: -.67px; }
.r em { text-align: right; letter-spacing: -.6px; }
.picked { background: #d9d9d9; }

.status { height: 24px; display: flex; align-items: center; padding-left: 14px; color: #1e395b; border-bottom: 1px solid #eee; letter-spacing: -.44px; }
.status > i { height: 10px; width: 1px; background: #eee; margin: 0 10px; }
.views { margin-left: auto; display: flex; align-items: center; margin-right: 8px; }
.details { width: 22px; height: 23px; border: 1px solid #26a0da; background: #cbe8f6; display: grid; place-items: center; }
.thumbs { width: 14px; height: 14px; margin-left: 4px; }

.taskbar { position: relative; width: 62px; display: flex; flex-direction: column; align-items: center; color: #fff; }
.wall { position: absolute; inset: 0; }
.task, .tray, .lang, .clock, .notif { position: relative; flex: none; }
.task { width: 62px; height: 47px; display: flex; align-items: center; justify-content: center; }
.task.s { height: 40px; }
.task.first { margin-top: 2px; }
.box { width: 60px; height: 44px; display: grid; place-items: center; border: 1px solid #777a7b; background: rgba(255,255,255,.2); }
.box.stacked { width: 53px; background: rgba(255,255,255,.16); }
.stack { width: 7px; height: 44px; border: solid #78818a; border-width: 1px; border-left: 0; background: linear-gradient(90deg, #59636e 2px, #78818a 2px 3px, #343f4b 3px 4px, #59636e 4px); }
.box.gray { background: #59626f; border-color: #858c94; }
.box.current { background: linear-gradient(#6d747d, #8b9095); border-color: #fff; }
.tray { height: 90px; margin-top: 245px; }
.temp { position: absolute; left: 11px; top: 24px; font: 12px/16px "Liberation Sans", sans-serif; color: #0000ff; letter-spacing: -1px; }
.lang { margin-top: 11px; }
.clock { margin-top: 21px; line-height: 17px; text-align: center; letter-spacing: -.75px; }
.notif { margin-top: 19px; }

.dialog { position: absolute; left: 408px; top: 406px; width: 402px; height: 182px; background: #f0f0f0; border: 1px solid #1a80d4; box-shadow: 0 5px 13px rgba(0,0,0,.34), 0 0 8px rgba(0,0,0,.2); }
.dialog header { height: 30px; background: #0078d7; color: #fff; display: flex; align-items: center; padding-left: 9px; letter-spacing: -.45px; }
.dialog header span { margin-left: 4px; flex: 1; }
.dialog header b { font-size: 13px; margin-right: 36px; }
.x { margin-right: 18px; }
.body { display: flex; padding: 20px 10px 0 20px; }
.logo { margin-top: 4px; flex: none; }
.logo text { font: 800 17px "Open Sans", sans-serif; fill: #f5f5f5; letter-spacing: 0; }
.form { margin-left: 20px; width: 250px; font-size: 11px; }
.field { height: 25px; background: #fff; border: 1px solid; border-color: #a0a0a0 #fff #fff #a0a0a0; box-shadow: inset 1px 1px #696969, inset -1px -1px #e3e3e3; color: #808080; line-height: 24px; padding-left: 2px; margin-bottom: 5px; letter-spacing: -.45px; }
.field:not(.focus) { letter-spacing: -.4px; }
.focus { position: relative; padding-left: 3px; }
.focus::before { content: ""; position: absolute; left: 3px; top: 5px; width: 1px; height: 13px; background: #000; }
.buttons { display: flex; justify-content: flex-end; align-items: center; margin: 35px 1px 0 0; gap: 11px; }
.btn { width: 78px; height: 23px; background: #f0f0f0; border: 1px solid; border-color: #fff #696969 #696969 #fff; box-shadow: inset -1px -1px #a0a0a0; text-align: center; line-height: 22px; }
.btn.ok { width: 79px; height: 25px; border-color: #696969; box-shadow: inset 1px 1px #fff, inset -1px -1px #a0a0a0; line-height: 24px; }
```
